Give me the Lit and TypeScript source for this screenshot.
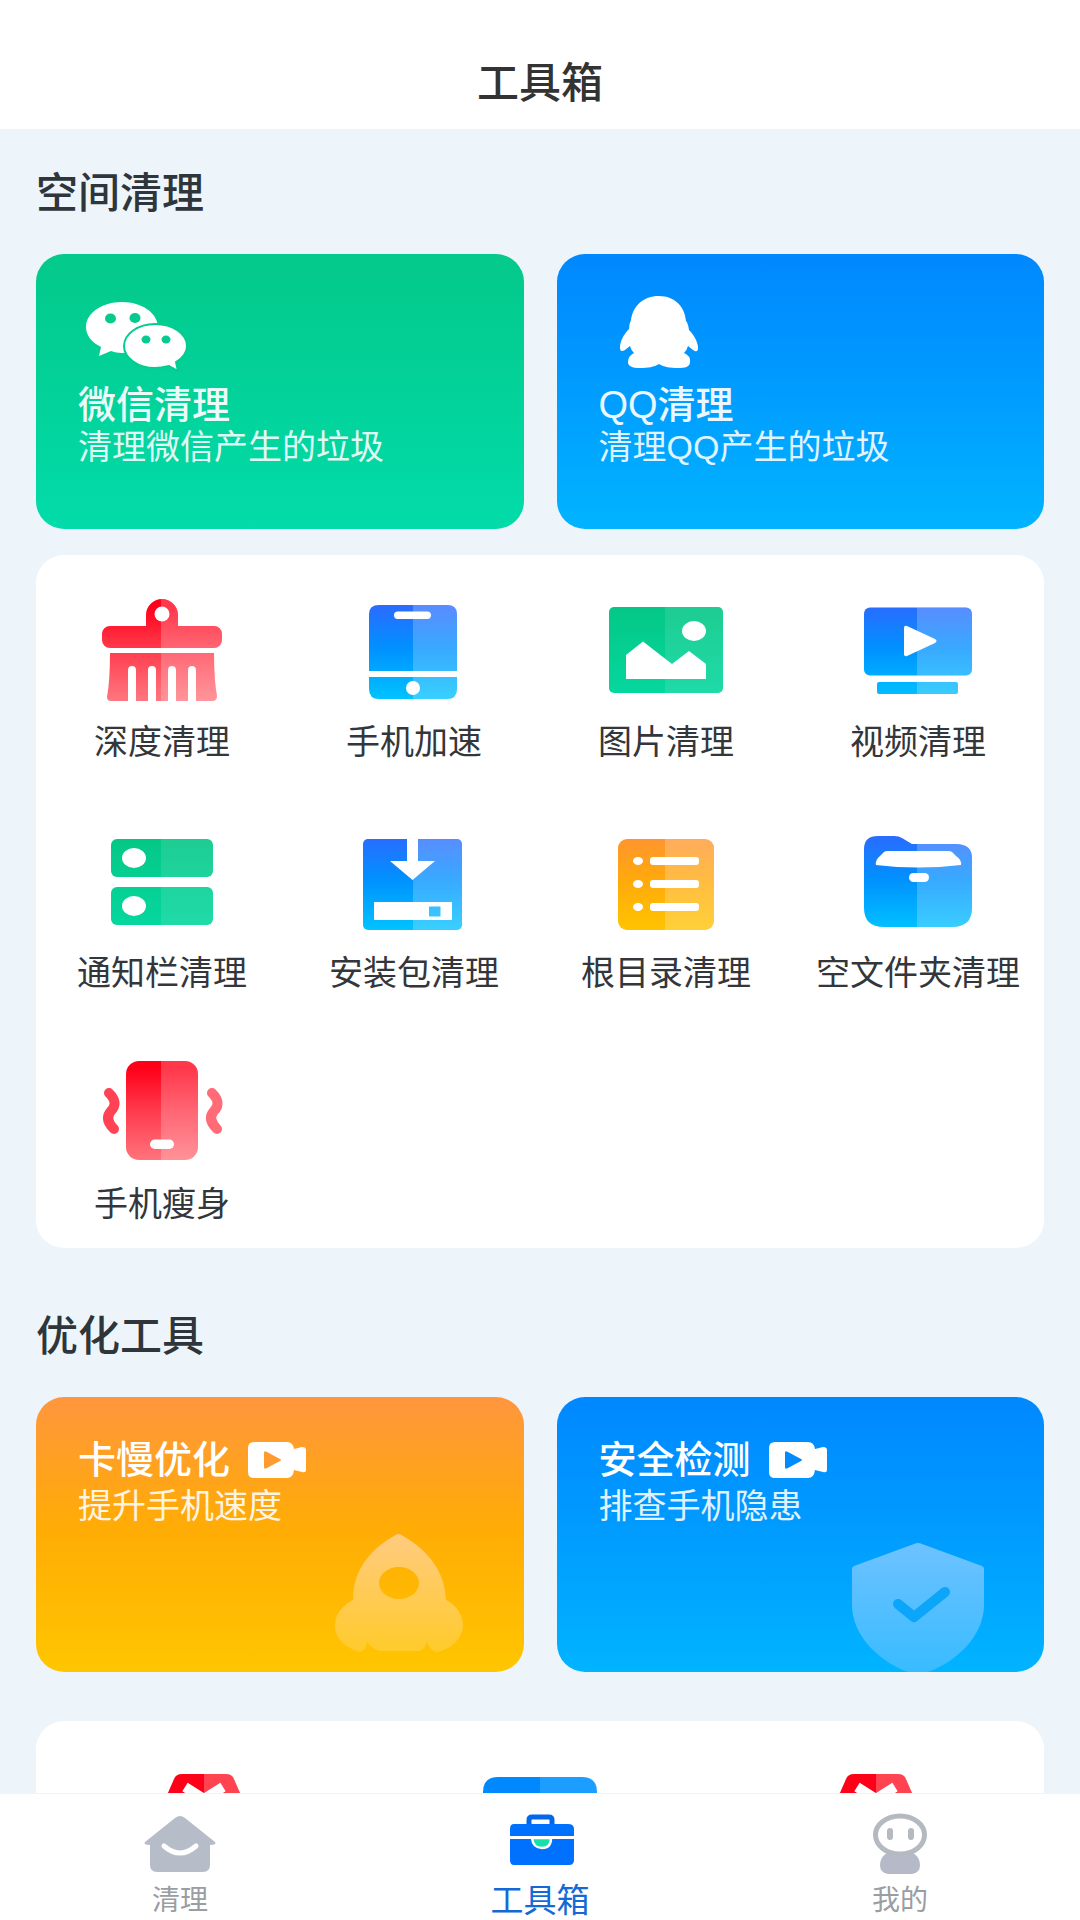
import { LitElement, html, svg, css, TemplateResult, SVGTemplateResult } from "lit";
import { customElement } from "lit/decorators.js";

type Tone = "red" | "blue" | "green" | "orange";

interface Tool {
  name: string;
  tone: Tone;
  shape: SVGTemplateResult;
  detail: SVGTemplateResult;
}

const tones: Record<Tone, string[]> = {
  red: ["#ff0019", "#ff3a4c", "#ff767e"],
  blue: ["#2a6cff", "#0091ff", "#00c4ff"],
  green: ["#04c785", "#05cf92", "#05d8a0"],
  orange: ["#ff9430", "#ffa90c", "#ffc400"],
};

/* Two-tone icon: a vertical gradient with a lighter right half. */
const toolIcon = (tool: Tool, index: number) => {
  const [top, middle, bottom] = tones[tool.tone];
  const light = tool.tone === "green" ? 0.1 : 0.22;
  return html`<svg class="tool-icon" viewBox="0 0 128 120" aria-hidden="true">
    <defs>
      <linearGradient id="tone-${index}" gradientUnits="userSpaceOnUse" x1="0" y1="16" x2="0" y2="110">
        <stop offset="0" stop-color=${top}></stop>
        <stop offset="0.45" stop-color=${middle}></stop>
        <stop offset="1" stop-color=${bottom}></stop>
      </linearGradient>
      <linearGradient id="half-${index}" gradientUnits="userSpaceOnUse" x1="0" y1="0" x2="128" y2="0">
        <stop offset="0.495" stop-color="#fff" stop-opacity="0"></stop>
        <stop offset="0.495" stop-color="#fff" stop-opacity=${light}></stop>
      </linearGradient>
    </defs>
    <g fill="url(#tone-${index})">${tool.shape}</g>
    <g fill="url(#half-${index})">${tool.shape}</g>
    <g fill="#fff">${tool.detail}</g>
  </svg>`;
};

const tools: Tool[] = [
  {
    name: "深度清理",
    tone: "red",
    shape: svg`<path d="M48 36V25a16 16 0 0 1 32 0v11h36a8 8 0 0 1 8 8v6a8 8 0 0 1-8 8H12a8 8 0 0 1-8-8v-6a8 8 0 0 1 8-8z"/>
      <path d="M12 63h104q0 28 3 43q0 5-5 5H98V80a4 4 0 0 0-8 0v31H78V80a4 4 0 0 0-8 0v31H58V80a4 4 0 0 0-8 0v31H38V80a4 4 0 0 0-8 0v31H13q-4 0-4-4q3-16 3-44z"/>`,
    detail: svg`<circle cx="64" cy="24" r="7.5"/>`,
  },
  {
    name: "手机加速",
    tone: "blue",
    shape: svg`<path d="M19 81V24q0-9 10-9h68q10 0 10 9v57z"/><path d="M19 87h88v12q0 10-10 10H29q-10 0-10-10z"/>`,
    detail: svg`<rect x="44" y="21.500" width="37" height="7.500" rx="3.700"/><circle cx="63" cy="98" r="7"/>`,
  },
  {
    name: "图片清理",
    tone: "green",
    shape: svg`<rect x="7" y="17" width="114" height="86" rx="5"/>`,
    detail: svg`<ellipse cx="92" cy="41" rx="12" ry="10"/><path d="M24 65L41 51.500L70 74L87 61L104 74V89H24z"/>`,
  },
  {
    name: "视频清理",
    tone: "blue",
    shape: svg`<rect x="10" y="17.500" width="108" height="68" rx="6"/><rect x="23" y="92" width="81" height="12" rx="2"/>`,
    detail: svg`<path d="M50 38q0-3 3-2l28 13q3 2 0 4L53 66q-3 1-3-2z"/>`,
  },
  {
    name: "通知栏清理",
    tone: "green",
    shape: svg`<rect x="13" y="18" width="102" height="38" rx="6"/><rect x="13" y="66" width="102" height="38" rx="6"/>`,
    detail: svg`<ellipse cx="36" cy="37" rx="12" ry="10"/><ellipse cx="36" cy="85" rx="12" ry="10"/>`,
  },
  {
    name: "安装包清理",
    tone: "blue",
    shape: svg`<rect x="13" y="18" width="99" height="91" rx="5"/>`,
    detail: svg`<path d="M57 17H68V40H85L62.500 59L40 40H57z"/><path fill-rule="evenodd" d="M24 81h78v18H24zM79 85.500v10h11.500v-10z"/>`,
  },
  {
    name: "根目录清理",
    tone: "orange",
    shape: svg`<rect x="16" y="18" width="96" height="91" rx="9"/>`,
    detail: svg`<ellipse cx="36" cy="40" rx="5" ry="4"/><ellipse cx="36" cy="63" rx="5" ry="4"/><ellipse cx="36" cy="86" rx="5" ry="4"/>
      <rect x="48" y="36" width="49" height="8" rx="3"/><rect x="48" y="59" width="49" height="8" rx="3"/><rect x="48" y="82" width="49" height="8" rx="3"/>`,
  },
  {
    name: "空文件夹清理",
    tone: "blue",
    shape: svg`<path d="M10 28q0-13 14-13h16q5 0 8 2l10 6h44q16 0 16 14v50q0 19-20 19H30q-20 0-20-19z"/>`,
    detail: svg`<path d="M22 44q-1-5 4-9l4-4q1-1 4-1h60q3 0 4 1l4 4q6 4 5 9q-43 5-85 0z"/><rect x="55" y="52" width="20" height="9" rx="4.500"/>`,
  },
  {
    name: "手机瘦身",
    tone: "red",
    shape: svg`<rect x="28" y="9" width="72" height="99" rx="13"/>`,
    detail: svg`<rect x="52" y="87.500" width="24" height="9.500" rx="4.700"/>
      <g fill="none" stroke-width="10" stroke-linecap="round">
        <path stroke="#ff4355" d="M11 41Q21 51 13 59Q6 67 16 77"/>
        <path stroke="#ff6b76" d="M114 41Q124 51 116 59Q109 67 119 77"/>
      </g>`,
  },
];

const wechat = html`<svg class="brand" viewBox="0 0 120 84" aria-hidden="true">
  <path fill="#fff" d="M44 10c20 0 35 11 36 24c0 14-16 27-36 27c-4 0-8-1-11-2l-12 5l2-9C13 50 8 43 8 35c0-14 16-25 36-25z"/>
  <ellipse cx="32.500" cy="26.500" rx="5.500" ry="5" fill="#05c98e"/><ellipse cx="57" cy="26" rx="5.500" ry="5" fill="#05c98e"/>
  <path fill="#fff" stroke="#05cb91" stroke-width="2" d="M77 32c18 0 32 10 32 22c0 7-4 12-11 16l2 9l-9-5c-4 1-8 2-14 2c-17 0-31-10-31-22s14-22 31-22z"/>
  <ellipse cx="68" cy="47.500" rx="4.500" ry="4" fill="#05cb91"/><ellipse cx="88" cy="47.500" rx="4.500" ry="4" fill="#05cb91"/>
</svg>`;

const penguin = html`<svg class="brand" viewBox="0 0 120 84" aria-hidden="true">
  <path fill="#fff" d="M60 4c16 0 26 11 27 25q2 2 3 9c6 6 9 13 9 18c0 4-2 4-5 2l-5-4q-1 4-4 7q7 3 6 9c0 5-5 6-12 6c-8 0-14-1-19-4c-5 3-11 4-19 4c-8 0-12-2-12-6q0-6 6-9q-3-3-4-7l-5 4c-4 2-5 1-5-3c0-5 3-12 9-18q0-5 2-9C34 14 44 4 60 4z"/>
</svg>`;

const camera = (tint: string) => html`<svg class="camera" viewBox="0 0 58 36" aria-hidden="true">
  <path fill="#fff" d="M6 0h33q6 0 7 7l8-2q4 0 4 3v20q0 3-4 2l-8-2q-1 8-7 8H6q-6 0-6-6V6q0-6 6-6z"/>
  <path fill=${tint} d="M16 11q0-3 3-1l13 7q2 1 0 2l-13 7q-3 2-3-1z"/>
</svg>`;

const rocket = html`<svg class="art" viewBox="0 0 132 140" aria-hidden="true">
  <defs><linearGradient id="rocket-fade" x1="0" y1="0" x2="0" y2="1">
    <stop offset="0" stop-color="#ffcb80"></stop><stop offset="1" stop-color="#ffcb2b"></stop>
  </linearGradient></defs>
  <path fill="url(#rocket-fade)" fill-rule="evenodd" d="M62 4q5-4 9 0c28 16 42 38 43 64c10 5 17 14 17 26c-1 14-14 24-26 26q-7-1-10-10q-3 9-9 9H48q-8-2-13-9q-1 9-7 10C14 116 3 107 3 94c0-12 7-20 18-26C21 42 34 20 62 4zM67 35c-11 0-20 7-20 16s9 16 20 16s20-7 20-16s-9-16-20-16z"/>
</svg>`;

const shield = html`<svg class="art" viewBox="0 0 132 140" aria-hidden="true">
  <defs><linearGradient id="shield-fade" x1="0" y1="0" x2="0" y2="1">
    <stop offset="0" stop-color="#6ec2ff"></stop><stop offset="1" stop-color="#38bcff"></stop>
  </linearGradient></defs>
  <path fill="url(#shield-fade)" d="M62 12q4-2 8 0l60 22q2 1 2 3v36C132 104 104 130 76 140H56C28 130 0 104 0 73V37q0-2 2-3z"/>
  <path fill="none" stroke="#0ba5fa" stroke-width="10" stroke-linecap="round" stroke-linejoin="round" d="M46 72L62 85L93 60"/>
</svg>`;

const envelope = html`<svg class="tool-icon" viewBox="0 0 128 120" aria-hidden="true">
  <path fill="#ff0019" d="M64 18H42q-6 0-8 5L8 83h56z"/>
  <path fill="#ff4351" d="M64 18h22q6 0 8 5l26 60H64z"/>
  <path fill="none" stroke="#fff" stroke-width="10" d="M45 31L83 55M83 31L45 55"/>
</svg>`;

const monitor = html`<svg class="tool-icon" viewBox="0 0 128 120" aria-hidden="true">
  <path fill="#0089ff" d="M64 21H22Q7 21 7 36v57h57z"/>
  <path fill="#1b9eff" d="M64 21h42q15 0 15 15v57H64z"/>
</svg>`;

const home = html`<svg class="nav-icon" viewBox="0 0 80 68" aria-hidden="true">
  <path fill="#b6bdc9" d="M35 8q5-4 10 0l30 24q2 3-5 3v20q0 7-7 7H17q-7 0-7-7V35q-7 0-5-3z"/>
  <path fill="none" stroke="#fff" stroke-width="5" stroke-linecap="round" d="M24 36q16 14 32 0"/>
</svg>`;

const toolbox = html`<svg class="nav-icon" viewBox="0 0 80 68" aria-hidden="true">
  <path fill="none" stroke="#0467ea" stroke-width="5" d="M29 16V10q0-3 3-3h17q3 0 3 3v6"/>
  <path fill="#0070ff" d="M14 14h54q6 0 6 5v7H10v-7q0-5 4-5z"/>
  <path fill="#0070ff" d="M10 29h64v21q0 5-5 5H14q-4 0-4-5z"/>
  <path fill="#18dfa8" stroke="#fff" stroke-width="2.500" d="M32 28h19q0 10-9 10t-10-10z"/>
</svg>`;

const person = html`<svg class="nav-icon" viewBox="0 0 80 68" aria-hidden="true">
  <path fill="#b6bac8" d="M27 43h26q7 4 7 12t-8 9H28q-8-1-8-9t7-12z"/>
  <ellipse cx="40" cy="25" rx="24.500" ry="19" fill="#fff" stroke="#b4babf" stroke-width="5"/>
  <path stroke="#b4babf" stroke-width="6" stroke-linecap="round" d="M30 21v6M51 21v6"/>
</svg>`;

@customElement("app-root")
export class AppRoot extends LitElement {
  static styles = css`
    :host {
      display: flex;
      flex-direction: column;
      height: 100vh;
      overflow: hidden;
      background: #edf5fb;
      color: #2f363b;
      font-family: "Liberation Sans", "Noto Sans CJK SC", sans-serif;
    }
    button {
      border: 0;
      margin: 0;
      padding: 0;
      background: none;
      color: inherit;
      font: inherit;
      text-align: left;
      cursor: pointer;
    }
    h1,
    h2 {
      margin: 0;
      font-size: 42px;
      line-height: 60px;
      font-weight: 500;
    }
    .header {
      padding: 54px 36px 15px;
      background: #fff;
      text-align: center;
      color: #333;
    }
    .content {
      flex: 1;
      min-height: 0;
      overflow-y: auto;
      scrollbar-width: none;
      padding: 35px 36px;
    }
    .section + .section {
      margin-top: 59px;
    }
    .cards {
      display: grid;
      grid-template-columns: 1fr 1fr;
      gap: 33px;
      margin-top: 30px;
    }
    .card {
      display: flex;
      flex-direction: column;
      min-height: 275px;
      padding: 38px 42px 0;
      border-radius: 28px;
      color: #fff;
      overflow: hidden;
    }
    .green {
      background: linear-gradient(#04c98a, #02cf95 35%, #02dcaa);
    }
    .blue {
      background: linear-gradient(#0088ff, #0098ff 40%, #00b4ff);
    }
    .orange {
      background: linear-gradient(#ff963e, #ffac05 48%, #ffc600);
    }
    .brand {
      width: 120px;
      height: 84px;
      margin-bottom: 8px;
    }
    .card-title {
      display: flex;
      align-items: center;
      gap: 18px;
      font-size: 38px;
      line-height: 42px;
      font-weight: 500;
      opacity: 0.92;
    }
    .with-video {
      line-height: 50px;
      opacity: 1;
    }
    .card-note {
      font-size: 34px;
      line-height: 42px;
      opacity: 0.88;
    }
    .camera {
      width: 58px;
      height: 36px;
    }
    .art {
      align-self: flex-end;
      width: 132px;
      height: 140px;
      margin: auto 18px 0 0;
    }
    .panel {
      display: grid;
      grid-template-columns: repeat(4, 1fr);
      row-gap: 59px;
      margin-top: 26px;
      padding: 35px 0 24px;
      border-radius: 28px;
      background: #fff;
    }
    .more {
      grid-template-columns: repeat(3, 1fr);
      margin-top: 49px;
    }
    .tool {
      display: flex;
      flex-direction: column;
      align-items: center;
      gap: 12px;
      font-size: 34px;
      line-height: 40px;
      white-space: nowrap;
      color: #33363a;
    }
    .tool-icon {
      width: 128px;
      height: 120px;
    }
    .nav {
      display: grid;
      grid-template-columns: 1fr 1fr 1fr;
      border-top: 1px solid #f1f4f7;
      background: #fff;
    }
    .nav-item {
      display: flex;
      flex-direction: column;
      align-items: center;
      gap: 5px;
      padding: 16px 0 1px;
      font-size: 28px;
      line-height: 36px;
      color: #9a9da2;
      text-decoration: none;
    }
    .active {
      font-size: 33px;
      color: #1569d6;
    }
    .nav-icon {
      width: 80px;
      height: 68px;
    }
  `;

  private navItem(label: string, target: string, icon: TemplateResult, active = false) {
    return html`<a
      class="nav-item ${active ? "active" : ""}"
      href="#${target}"
      aria-current=${active ? "page" : "false"}
      >${icon}<span>${label}</span></a
    >`;
  }

  render() {
    return html`
      <header class="header"><h1>工具箱</h1></header>
      <main class="content">
        <section class="section">
          <h2>空间清理</h2>
          <div class="cards">
            <button class="card green">
              ${wechat}
              <span class="card-title">微信清理</span>
              <span class="card-note">清理微信产生的垃圾</span>
            </button>
            <button class="card blue">
              ${penguin}
              <span class="card-title">QQ清理</span>
              <span class="card-note">清理QQ产生的垃圾</span>
            </button>
          </div>
          <div class="panel">
            ${tools.map((tool, i) => html`<button class="tool">${toolIcon(tool, i)}<span>${tool.name}</span></button>`)}
          </div>
        </section>
        <section class="section">
          <h2>优化工具</h2>
          <div class="cards">
            <button class="card orange">
              <span class="card-title with-video">卡慢优化${camera("#ff9b30")}</span>
              <span class="card-note">提升手机速度</span>
              ${rocket}
            </button>
            <button class="card blue">
              <span class="card-title with-video">安全检测${camera("#008cff")}</span>
              <span class="card-note">排查手机隐患</span>
              ${shield}
            </button>
          </div>
          <div class="panel more">
            <div class="tool">${envelope}</div>
            <div class="tool">${monitor}</div>
            <div class="tool">${envelope}</div>
          </div>
        </section>
      </main>
      <nav class="nav">
        ${this.navItem("清理", "clean", home)} ${this.navItem("工具箱", "tools", toolbox, true)}
        ${this.navItem("我的", "me", person)}
      </nav>
    `;
  }
}
